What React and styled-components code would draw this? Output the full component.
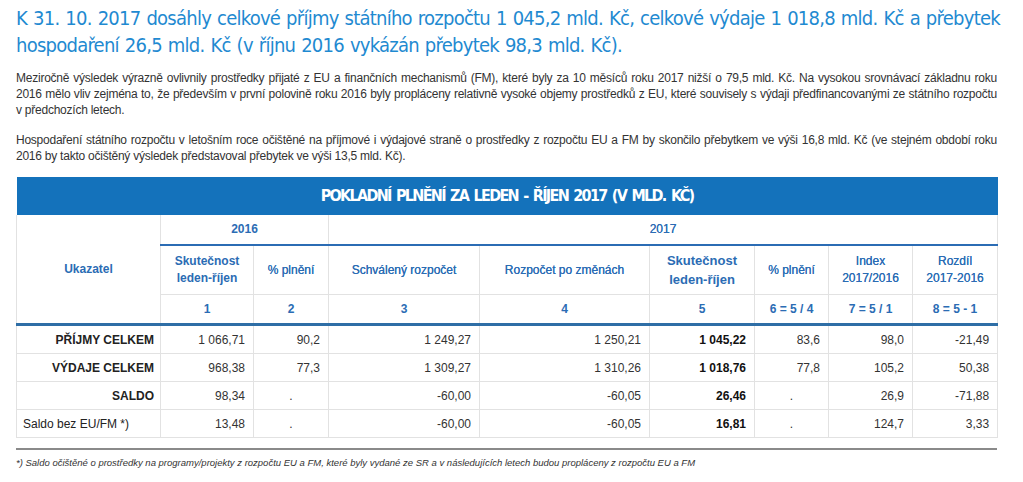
import React from "react";
import styled, { createGlobalStyle } from "styled-components";

const Global = createGlobalStyle`
  html, body {
    margin: 0;
    padding: 0;
    background: #fff;
  }
  body {
    font-family: "Liberation Sans", Arial, sans-serif;
  }
`;

const Page = styled.div`
  width: 981px;
  padding: 5px 16px 0 16px;
`;

const Heading = styled.h1`
  margin: 0 -10px 11px 0;
  font: 400 20px/27px "DejaVu Sans Condensed", "DejaVu Sans", sans-serif;
  color: #1f8ad1;
  letter-spacing: -0.75px;
  word-spacing: 1px;
`;

const Para = styled.div`
  margin: 0 0 14px 0;
  font-size: 12px;
  line-height: 16px;
  letter-spacing: -0.24px;
  color: #333;
`;

const Line = styled.span`
  display: block;
  text-align: justify;
  text-align-last: ${(p) => (p.$last ? "left" : "justify")};
`;

const Table = styled.table`
  width: 981px;
  border-collapse: collapse;
  table-layout: fixed;
  margin-top: -1px;
  font-size: 12px;
  color: #333;
`;

const TitleCell = styled.th`
  background: #1472bb;
  color: #fff;
  height: 38px;
  padding: 0;
  font: 700 16px/38px "DejaVu Sans Condensed", "DejaVu Sans", sans-serif;
  letter-spacing: -1.7px;
  word-spacing: 2px;
  text-align: center;
  text-transform: uppercase;
`;

const Head = styled.th`
  border: 1px solid #e2e2e2;
  border-top: none;
  color: #2b6cb4;
  font-weight: ${(p) => (p.$strong ? 700 : 400)};
  font-size: ${(p) => (p.$big ? "13px" : "12px")};
  text-align: center;
  padding: 0 4px;
  line-height: ${(p) => (p.$big ? "19px" : "17px")};
  height: ${(p) => p.$h || 28}px;
  border-bottom: ${(p) => p.$line || "1px solid #e2e2e2"};
  text-shadow: ${(p) => (p.$strong ? "none" : "0 0 0.3px #2b6cb4")};
`;

const Label = styled.td`
  border: 1px solid #e2e2e2;
  text-align: ${(p) => (p.$plain ? "left" : "right")};
  font-weight: ${(p) => (p.$plain ? 400 : 700)};
  color: #222;
  padding: 0 ${(p) => (p.$plain ? "0 0 6px" : "6px 0 0")};
  height: 27px;
`;

const Num = styled.td`
  border: 1px solid #e2e2e2;
  text-align: ${(p) => (p.$center ? "center" : "right")};
  font-weight: ${(p) => (p.$bold ? 700 : 400)};
  color: ${(p) => (p.$bold ? "#111" : "#333")};
  padding: 0 ${(p) => (p.$center ? "0" : "8px")} 0 0;
  height: 27px;
`;

const Rule = styled.hr`
  margin: 10px 0 0 0;
  border: none;
  border-top: 2px solid #8a8a8a;
`;

const Note = styled.p`
  margin: 7px 0 0 0;
  font-size: 9.5px;
  font-style: italic;
  color: #333;
`;

const widths = [144, 93, 75, 151, 170, 105, 74, 84, 85];

const rows = [
  { label: "PŘÍJMY CELKEM", v: ["1 066,71", "90,2", "1 249,27", "1 250,21", "1 045,22", "83,6", "98,0", "-21,49"] },
  { label: "VÝDAJE CELKEM", v: ["968,38", "77,3", "1 309,27", "1 310,26", "1 018,76", "77,8", "105,2", "50,38"] },
  { label: "SALDO", v: ["98,34", ".", "-60,00", "-60,05", "26,46", ".", "26,9", "-71,88"] },
  { label: "Saldo bez EU/FM *)", plain: true, v: ["13,48", ".", "-60,00", "-60,05", "16,81", ".", "124,7", "3,33"] },
];

const paras = [
  [
    "Meziročně výsledek výrazně ovlivnily prostředky přijaté z EU a finančních mechanismů (FM), které byly za 10 měsíců roku 2017 nižší o 79,5 mld. Kč. Na vysokou srovnávací základnu roku",
    "2016 mělo vliv zejména to, že především v první polovině roku 2016 byly propláceny relativně vysoké objemy prostředků z EU, které souvisely s výdaji předfinancovanými ze státního rozpočtu",
    "v předchozích letech.",
  ],
  [
    "Hospodaření státního rozpočtu v letošním roce očištěné na příjmové i výdajové straně o prostředky z rozpočtu EU a FM by skončilo přebytkem ve výši 16,8 mld. Kč (ve stejném období roku",
    "2016 by takto očištěný výsledek představoval přebytek ve výši 13,5 mld. Kč).",
  ],
];

const blue = "2px solid #2b6cb4";
const thick = "3px solid #2e6ea6";

export default function App() {
  return (
    <Page>
      <Global />
      <Heading>
        K 31. 10. 2017 dosáhly celkové příjmy státního rozpočtu 1 045,2 mld. Kč, celkové výdaje 1 018,8 mld. Kč a přebytek
        hospodaření 26,5 mld. Kč (v říjnu 2016 vykázán přebytek 98,3 mld. Kč).
      </Heading>
      {paras.map((lines, i) => (
        <Para key={i}>
          {lines.map((l, j) => (
            <Line key={j} $last={j === lines.length - 1}>{l}</Line>
          ))}
        </Para>
      ))}
      <Table>
        <colgroup>
          {widths.map((w, i) => (
            <col key={i} style={{ width: w }} />
          ))}
        </colgroup>
        <thead>
          <tr>
            <TitleCell colSpan={9}>Pokladní plnění za leden - říjen 2017 (v mld. Kč)</TitleCell>
          </tr>
          <tr>
            <Head rowSpan={3} $strong $h={29} $line={thick}>Ukazatel</Head>
            <Head colSpan={2} $strong $h={29} $line={blue}>2016</Head>
            <Head colSpan={6} $h={29} $line={blue}>2017</Head>
          </tr>
          <tr>
            <Head $strong $h={48}>Skutečnost<br />leden-říjen</Head>
            <Head $h={48}>% plnění</Head>
            <Head $h={48}>Schválený rozpočet</Head>
            <Head $h={48}>Rozpočet po změnách</Head>
            <Head $strong $big $h={48}>Skutečnost<br />leden-říjen</Head>
            <Head $h={48}>% plnění</Head>
            <Head $h={48}>Index<br />2017/2016</Head>
            <Head $h={48}>Rozdíl<br />2017-2016</Head>
          </tr>
          <tr>
            {["1", "2", "3", "4", "5", "6 = 5 / 4", "7 = 5 / 1", "8 = 5 - 1"].map((t, i) => (
              <Head key={i} $strong $h={28} $line={thick}>{t}</Head>
            ))}
          </tr>
        </thead>
        <tbody>
          {rows.map((r) => (
            <tr key={r.label}>
              <Label $plain={r.plain}>{r.label}</Label>
              {r.v.map((x, i) => (
                <Num key={i} $bold={i === 4} $center={x === "."}>{x}</Num>
              ))}
            </tr>
          ))}
        </tbody>
      </Table>
      <Rule />
      <Note>
        *) Saldo očištěné o prostředky na programy/projekty z rozpočtu EU a FM, které byly vydané ze SR a v následujících letech budou propláceny z rozpočtu EU a FM
      </Note>
    </Page>
  );
}
